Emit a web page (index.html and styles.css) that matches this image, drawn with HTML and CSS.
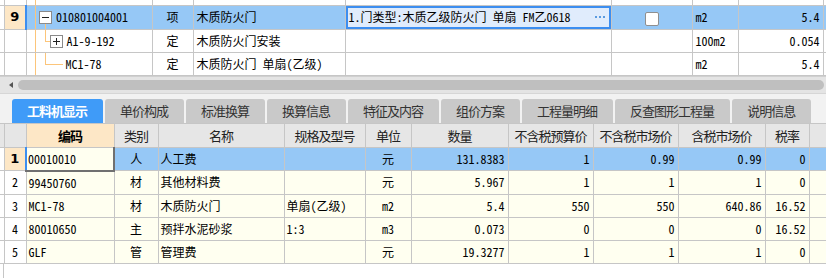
FILE: index.html
```html
<!DOCTYPE html>
<html>
<head>
<meta charset="utf-8">
<link rel="stylesheet" href="styles.css">
</head>
<body>
<table class="grid top">
  <colgroup>
    <col class="w-gut"><col class="w-num"><col style="width:126px"><col style="width:41px"><col style="width:152px"><col style="width:266px"><col style="width:81px"><col style="width:46px"><col style="width:85px"><col style="width:30px">
  </colgroup>
  <tr class="stub"><td></td><td></td><td class="code"><svg class="tree" width="29" height="4"><line x1="8.5" y1="0" x2="8.5" y2="5" /></svg></td><td></td><td></td><td></td><td></td><td></td><td></td><td></td></tr>
  <tr class="sel">
    <td class="gut"></td>
    <td class="num act">9</td>
    <td class="code bar"><div class="tcell"><svg class="tree" width="29" height="22"><line x1="8.5" y1="-1" x2="8.5" y2="23"/><line x1="18.5" y1="18" x2="18.5" y2="23"/><rect x="12.5" y="5.5" width="12" height="12" class="box"/><line x1="15" y1="11.5" x2="22" y2="11.5" class="sign"/></svg><span>010801004001</span></div></td>
    <td class="c">项</td>
    <td>木质防火门</td>
    <td class="edit"><div class="editbox"><span>1.门类型:木质乙级防火门 单扇 FM乙0618</span><span class="dots"><i></i><i></i><i></i></span></div></td>
    <td class="c"><span class="chk"></span></td>
    <td>m2</td>
    <td class="r">5.4</td>
    <td></td>
  </tr>
  <tr>
    <td class="gut"></td>
    <td class="num"></td>
    <td class="code"><div class="tcell"><svg class="tree" width="40" height="22"><line x1="8.5" y1="-1" x2="8.5" y2="23"/><line x1="18.5" y1="-1" x2="18.5" y2="11.5"/><line x1="18" y1="11.5" x2="23" y2="11.5"/><rect x="23.5" y="5.5" width="12" height="12" class="box"/><line x1="26" y1="11.5" x2="33" y2="11.5" class="sign"/><line x1="29.5" y1="8" x2="29.5" y2="15" class="sign"/></svg><span>A1-9-192</span></div></td>
    <td class="c">定</td>
    <td>木质防火门安装</td>
    <td></td>
    <td></td>
    <td>100m2</td>
    <td class="r">0.054</td>
    <td></td>
  </tr>
  <tr>
    <td class="gut"></td>
    <td class="num"></td>
    <td class="code"><div class="tcell"><svg class="tree" width="39" height="22"><line x1="8.5" y1="-1" x2="8.5" y2="23"/><line x1="18.5" y1="-1" x2="18.5" y2="11.5"/><line x1="18" y1="11.5" x2="36" y2="11.5"/></svg><span>MC1-78</span></div></td>
    <td class="c">定</td>
    <td>木质防火门 单扇(乙级)</td>
    <td></td>
    <td></td>
    <td>m2</td>
    <td class="r">5.4</td>
    <td></td>
  </tr>
</table>

<div class="hscroll">
  <span class="arrow"></span>
  <span class="thumb"></span>
</div>

<div class="tabs">
  <div class="tab active">工料机显示</div>
  <div class="tab">单价构成</div>
  <div class="tab">标准换算</div>
  <div class="tab">换算信息</div>
  <div class="tab">特征及内容</div>
  <div class="tab">组价方案</div>
  <div class="tab">工程量明细</div>
  <div class="tab">反查图形工程量</div>
  <div class="tab">说明信息</div>
</div>

<table class="grid bottom">
  <colgroup>
    <col class="w-gut"><col class="w-num"><col style="width:88px"><col style="width:44px"><col style="width:126px"><col style="width:81px"><col style="width:46px"><col style="width:97px"><col style="width:85px"><col style="width:85px"><col style="width:87px"><col style="width:44px"><col style="width:30px">
  </colgroup>
  <tr class="head">
    <th></th><th></th><th class="hl">编码</th><th>类别</th><th>名称</th><th>规格及型号</th><th>单位</th><th>数量</th><th>不含税预算价</th><th>不含税市场价</th><th>含税市场价</th><th>税率</th><th></th>
  </tr>
  <tr class="sel">
    <td class="gut"></td><td class="num act">1</td><td class="focus">00010010</td><td class="c">人</td><td>人工费</td><td></td><td class="c">元</td><td class="r">131.8383</td><td class="r">1</td><td class="r">0.99</td><td class="r">0.99</td><td class="r">0</td><td></td>
  </tr>
  <tr>
    <td class="gut"></td><td class="num">2</td><td>99450760</td><td class="c">材</td><td>其他材料费</td><td></td><td class="c">元</td><td class="r">5.967</td><td class="r">1</td><td class="r">1</td><td class="r">1</td><td class="r">0</td><td></td>
  </tr>
  <tr>
    <td class="gut"></td><td class="num">3</td><td>MC1-78</td><td class="c">材</td><td>木质防火门</td><td>单扇(乙级)</td><td class="c">m2</td><td class="r">5.4</td><td class="r">550</td><td class="r">550</td><td class="r">640.86</td><td class="r">16.52</td><td></td>
  </tr>
  <tr>
    <td class="gut"></td><td class="num">4</td><td>80010650</td><td class="c">主</td><td>预拌水泥砂浆</td><td>1:3</td><td class="c">m3</td><td class="r">0.073</td><td class="r">0</td><td class="r">0</td><td class="r">0</td><td class="r">16.52</td><td></td>
  </tr>
  <tr>
    <td class="gut"></td><td class="num">5</td><td>GLF</td><td class="c">管</td><td>管理费</td><td></td><td class="c">元</td><td class="r">19.3277</td><td class="r">1</td><td class="r">1</td><td class="r">1</td><td class="r">0</td><td></td>
  </tr>
</table>
<div class="filler"></div>
</body>
</html>
```

FILE: styles.css
```css
html, body {
  margin: 0;
  padding: 0;
  background: #ffffff;
  overflow: hidden;
  width: 826px;
  height: 278px;
}
body {
  font-family: "Noto Sans Mono CJK SC", "Noto Sans CJK SC", monospace;
  font-size: 12px;
  color: #000;
}
.grid {
  border-collapse: collapse;
  table-layout: fixed;
}
.grid.top { width: 853px; }
.grid.bottom { width: 839px; }
.grid td, .grid th {
  border: 1px solid #c6c6c6;
  padding: 0 3px;
  white-space: nowrap;
  overflow: hidden;
  height: 22px;
  line-height: 22px;
  box-sizing: border-box;
}
.bottom td { padding: 0 2px; }
.w-gut { width: 4px; }
.w-num { width: 22px; }
.grid td.gut { padding: 0; border-left: none; }
.grid .stub td { height: 5px; line-height: 0; padding: 0; border-top: none; }
.grid .stub td:first-child { border-left: none; }
.c { text-align: center; }
.grid td.r { text-align: right; padding-right: 3px; }
.grid td.num {
  padding: 0;
  text-align: center;
}
.grid td.num.act {
  background: #fde7c6;
  font-weight: bold;
  font-size: 13px;
  font-family: "DejaVu Sans", sans-serif;
}
.sel td { background: #96c8f6; }
.sel td.gut { background: #fff; }
.grid td.bar { border-left: 2px solid #3c8ef0; }

/* tree */
.grid td.code { padding: 0; }
.tcell { display: flex; align-items: center; height: 22px; }
.tree { flex: none; overflow: visible; display: block; }
.tree line { stroke: #fcc57a; stroke-width: 1; }
.tree .box { fill: #fff; stroke: #8a8a8a; }
.tree line.sign { stroke: #222; }

/* editor */
.grid td.edit { padding: 0; }
.editbox {
  display: flex;
  align-items: center;
  justify-content: space-between;
  height: 19px;
  background: #e0ecfc;
  border: 2px solid #3c8ef0;
  padding: 0 4px 0 1px;
}
.dots { display: flex; gap: 2px; }
.dots i { width: 2px; height: 2px; background: #5a9be0; display: block; }
.chk {
  display: inline-block;
  width: 12px;
  height: 12px;
  border: 1px solid #8f8f8f;
  border-radius: 2px;
  background: #fff;
  vertical-align: middle;
}

/* scroll */
.hscroll {
  display: flex;
  align-items: center;
  gap: 5px;
  height: 16px;
  background: #e4e4e4;
  border-top: 1px solid #d0d0d0;
  border-bottom: 1px solid #d6d6d6;
  padding-left: 9px;
}
.arrow {
  width: 0; height: 0;
  border-top: 3px solid transparent;
  border-bottom: 3px solid transparent;
  border-right: 4px solid #555;
}
.thumb {
  flex: 1;
  height: 10px;
  margin-right: 2px;
  border-radius: 5px;
  background: #bfbfbf;
}

/* tabs */
.tabs {
  display: flex;
  gap: 2px;
  padding: 5px 0 0 12px;
  background: #f2f2f2;
  height: 24px;
}
.tab {
  font-family: "Noto Sans CJK SC", sans-serif;
  font-size: 13px;
  letter-spacing: -1px;
  line-height: 24px;
  height: 24px;
  padding: 0 16px 0 15px;
  background: #c9c9c9;
  color: #333;
  border-radius: 3px 3px 0 0;
}
.tab.active {
  background: #3f9bf8;
  color: #fff;
  font-weight: bold;
}

/* bottom grid */
.bottom .head th {
  background: #e6e6e6;
  font-family: "Noto Sans CJK SC", sans-serif;
  font-weight: normal;
  font-size: 13px;
  letter-spacing: -1px;
  height: 24px;
  line-height: 23px;
  padding: 0;
  text-align: center;
  color: #222;
}
.bottom .head th:first-child { border-left: none; }
.bottom .head th.hl { background: #fde7c6; font-weight: bold; color: #000; }
.bottom td { background: #fffff0; }
.bottom td.gut, .bottom td.num { background: #fff; }
.bottom .sel td { background: #96c8f6; }
.bottom .sel td.gut { background: #fff; }
.bottom .sel td.num.act { background: #fde7c6; }
.bottom td.focus {
  background: #fffff0;
  border-left: 2px solid #3c8ef0;
  border-top: 1px solid #3c8ef0;
  border-right: 2px solid #707070;
  border-bottom: 2px solid #707070;
  padding-left: 1px;
}
.filler {
  width: 3px;
  height: 14px;
  border-right: 1px solid #c6c6c6;
}
```
